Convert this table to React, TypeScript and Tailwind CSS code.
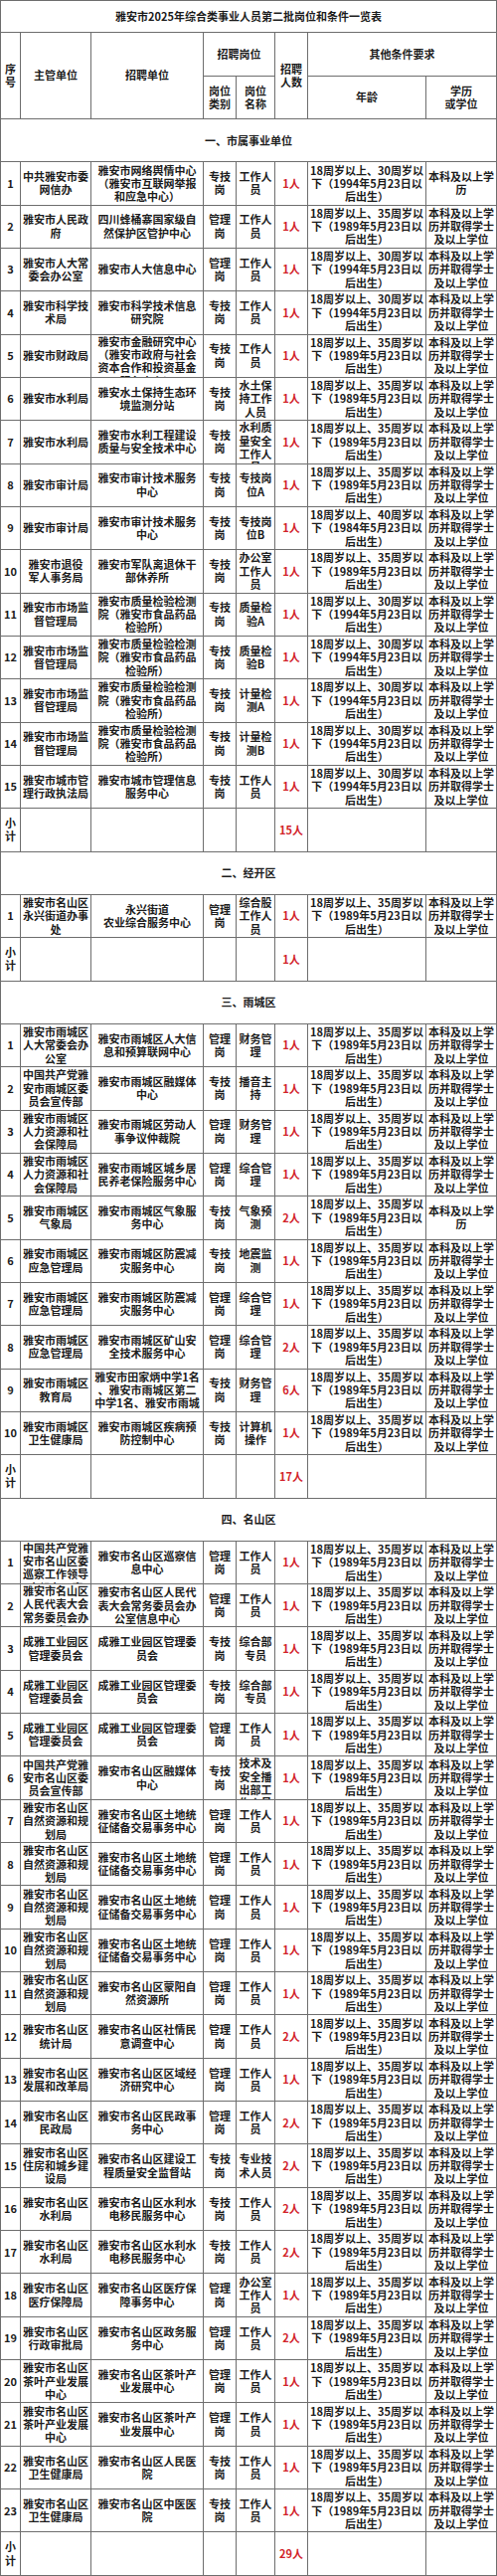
import type { ReactNode } from "react";
import clsx from "clsx";

type Job = {
  dept: string;
  unit: string;
  kind: string;
  post: string;
  count: number;
  age: 30 | 35 | 40;
  edu: "a" | "b";
};

type Section = { title: string; jobs: Job[] };

const AGE_YEAR = { 30: 1994, 35: 1989, 40: 1984 } as const;

function ageText(age: 30 | 35 | 40) {
  return `18周岁以上、${age}周岁以\n下（${AGE_YEAR[age]}年5月23日以\n后出生）`;
}

function eduText(edu: "a" | "b") {
  return edu === "a" ? "本科及以上学历" : "本科及以上学历并取得学士及以上学位";
}

function j(
  dept: string,
  unit: string,
  kind: string,
  post: string,
  count = 1,
  age: 30 | 35 | 40 = 35,
  edu: "a" | "b" = "b",
): Job {
  return { dept, unit, kind, post, count, age, edu };
}

const ZJ = "专技岗";
const GL = "管理岗";
const GZ = "工作人员";

const sections: Section[] = [
  {
    title: "一、市属事业单位",
    jobs: [
      j("中共雅安市委网信办", "雅安市网络舆情中心（雅安市互联网举报和应急中心）", ZJ, GZ, 1, 30, "a"),
      j("雅安市人民政府", "四川蜂桶寨国家级自然保护区管护中心", GL, GZ),
      j("雅安市人大常委会办公室", "雅安市人大信息中心", GL, GZ, 1, 30),
      j("雅安市科学技术局", "雅安市科学技术信息研究院", ZJ, GZ, 1, 30),
      j("雅安市财政局", "雅安市金融研究中心（雅安市政府与社会资本合作和投资基金服务中心）", ZJ, GZ),
      j("雅安市水利局", "雅安水土保持生态环境监测分站", ZJ, "水土保持工作人员"),
      j("雅安市水利局", "雅安市水利工程建设质量与安全技术中心", ZJ, "水利质量安全工作人员"),
      j("雅安市审计局", "雅安市审计技术服务中心", ZJ, "专技岗位A"),
      j("雅安市审计局", "雅安市审计技术服务中心", ZJ, "专技岗位B", 1, 40),
      j("雅安市退役\n军人事务局", "雅安市军队离退休干部休养所", ZJ, "办公室工作人员"),
      j("雅安市市场监督管理局", "雅安市质量检验检测院（雅安市食品药品检验所）", ZJ, "质量检验A", 1, 30),
      j("雅安市市场监督管理局", "雅安市质量检验检测院（雅安市食品药品检验所）", ZJ, "质量检验B", 1, 30),
      j("雅安市市场监督管理局", "雅安市质量检验检测院（雅安市食品药品检验所）", ZJ, "计量检测A", 1, 30),
      j("雅安市市场监督管理局", "雅安市质量检验检测院（雅安市食品药品检验所）", ZJ, "计量检测B", 1, 30),
      j("雅安市城市管理行政执法局", "雅安市城市管理信息服务中心", ZJ, GZ, 1, 30),
    ],
  },
  {
    title: "二、经开区",
    jobs: [j("雅安市名山区永兴街道办事处", "永兴街道\n农业综合服务中心", GL, "综合股工作人员")],
  },
  {
    title: "三、雨城区",
    jobs: [
      j("雅安市雨城区人大常委会办公室", "雅安市雨城区人大信息和预算联网中心", GL, "财务管理"),
      j("中国共产党雅安市雨城区委员会宣传部", "雅安市雨城区融媒体中心", ZJ, "播音主持"),
      j("雅安市雨城区人力资源和社会保障局", "雅安市雨城区劳动人事争议仲裁院", GL, "财务管理"),
      j("雅安市雨城区人力资源和社会保障局", "雅安市雨城区城乡居民养老保险服务中心", GL, "综合管理"),
      j("雅安市雨城区气象局", "雅安市雨城区气象服务中心", ZJ, "气象预测", 2, 35, "a"),
      j("雅安市雨城区应急管理局", "雅安市雨城区防震减灾服务中心", ZJ, "地震监测"),
      j("雅安市雨城区应急管理局", "雅安市雨城区防震减灾服务中心", GL, "综合管理"),
      j("雅安市雨城区应急管理局", "雅安市雨城区矿山安全技术服务中心", GL, "综合管理", 2),
      j("雅安市雨城区教育局", "雅安市田家炳中学1名\n、雅安市雨城区第二\n中学1名、雅安市雨城", ZJ, "财务管理", 6),
      j("雅安市雨城区卫生健康局", "雅安市雨城区疾病预防控制中心", ZJ, "计算机操作"),
    ],
  },
  {
    title: "四、名山区",
    jobs: [
      j("中国共产党雅安市名山区委巡察工作领导小组办公室", "雅安市名山区巡察信息中心", GL, GZ),
      j("雅安市名山区人民代表大会常务委员会办公室", "雅安市名山区人民代表大会常务委员会办公室信息中心", GL, GZ),
      j("成雅工业园区管理委员会", "成雅工业园区管理委员会", ZJ, "综合部专员"),
      j("成雅工业园区管理委员会", "成雅工业园区管理委员会", ZJ, "综合部专员"),
      j("成雅工业园区管理委员会", "成雅工业园区管理委员会", GL, GZ),
      j("中国共产党雅安市名山区委员会宣传部", "雅安市名山区融媒体中心", ZJ, "技术及安全播出部工作人员"),
      j("雅安市名山区自然资源和规划局", "雅安市名山区土地统征储备交易事务中心", GL, GZ),
      j("雅安市名山区自然资源和规划局", "雅安市名山区土地统征储备交易事务中心", GL, GZ),
      j("雅安市名山区自然资源和规划局", "雅安市名山区土地统征储备交易事务中心", GL, GZ),
      j("雅安市名山区自然资源和规划局", "雅安市名山区土地统征储备交易事务中心", GL, GZ),
      j("雅安市名山区自然资源和规划局", "雅安市名山区蒙阳自然资源所", GL, GZ),
      j("雅安市名山区统计局", "雅安市名山区社情民意调查中心", GL, GZ, 2),
      j("雅安市名山区发展和改革局", "雅安市名山区区域经济研究中心", GL, GZ),
      j("雅安市名山区民政局", "雅安市名山区民政事务中心", GL, GZ, 2),
      j("雅安市名山区住房和城乡建设局", "雅安市名山区建设工程质量安全监督站", ZJ, "专业技术人员", 2),
      j("雅安市名山区水利局", "雅安市名山区水利水电移民服务中心", ZJ, GZ, 2),
      j("雅安市名山区水利局", "雅安市名山区水利水电移民服务中心", ZJ, GZ, 2),
      j("雅安市名山区医疗保障局", "雅安市名山区医疗保障事务中心", GL, "办公室工作人员"),
      j("雅安市名山区行政审批局", "雅安市名山区政务服务中心", GL, GZ, 2),
      j("雅安市名山区茶叶产业发展中心", "雅安市名山区茶叶产业发展中心", GL, GZ),
      j("雅安市名山区茶叶产业发展中心", "雅安市名山区茶叶产业发展中心", GL, GZ),
      j("雅安市名山区卫生健康局", "雅安市名山区人民医院", ZJ, GZ),
      j("雅安市名山区卫生健康局", "雅安市名山区中医医院", ZJ, GZ),
    ],
  },
];

function Cell({ children, className }: { children?: ReactNode; className?: string }) {
  return (
    <div
      className={clsx(
        "flex justify-center overflow-hidden bg-white text-center [align-items:safe_center]",
        className,
      )}
    >
      <div className="w-full whitespace-pre-line">{children}</div>
    </div>
  );
}

const ROW = "h-[42.33px]";
const RED = "text-[#d2232a]";

function JobRow({ index, job }: { index: number; job: Job }) {
  return (
    <>
      <Cell className={ROW}>{index}</Cell>
      <Cell className={clsx(ROW, "px-[1.5px]")}>{job.dept}</Cell>
      <Cell className={clsx(ROW, "px-[3px]")}>{job.unit}</Cell>
      <Cell className={ROW}>{job.kind}</Cell>
      <Cell className={ROW}>{job.post}</Cell>
      <Cell className={clsx(ROW, RED)}>{job.count}人</Cell>
      <Cell className={ROW}>{ageText(job.age)}</Cell>
      <Cell className={clsx(ROW, "px-[1px]")}>{eduText(job.edu)}</Cell>
    </>
  );
}

function SubtotalRow({ total }: { total: number }) {
  return (
    <>
      <Cell className={ROW}>小计</Cell>
      <Cell className={ROW} />
      <Cell className={ROW} />
      <Cell className={ROW} />
      <Cell className={ROW} />
      <Cell className={clsx(ROW, RED)}>{total}人</Cell>
      <Cell className={ROW} />
      <Cell className={ROW} />
    </>
  );
}

export default function App() {
  return (
    <div className="w-[500px] bg-white font-['Noto_Sans_CJK_SC',sans-serif] text-[11px] leading-[13.33px] font-bold text-[#1c1c1c] [text-spacing-trim:space-all]">
      <div className="grid grid-cols-[19px_70px_112px_32px_38px_32px_118px_70px] gap-px bg-[#6e6e6e] p-px">
        <Cell className="col-span-8 h-[31px]">雅安市2025年综合类事业人员第二批岗位和条件一览表</Cell>

        <Cell className="row-span-2">序号</Cell>
        <Cell className="row-span-2">主管单位</Cell>
        <Cell className="row-span-2">招聘单位</Cell>
        <Cell className="col-span-2 h-[43px]">招聘岗位</Cell>
        <Cell className="row-span-2">招聘人数</Cell>
        <Cell className="col-span-2 h-[43px]">其他条件要求</Cell>
        <Cell className="h-[42px]">岗位类别</Cell>
        <Cell className="h-[42px]">{"岗位\n名称"}</Cell>
        <Cell className="h-[42px]">年龄</Cell>
        <Cell className="h-[42px]">{"学历\n或学位"}</Cell>

        {sections.map((section) => (
          <SectionBlock key={section.title} section={section} />
        ))}
      </div>
    </div>
  );
}

function SectionBlock({ section }: { section: Section }) {
  const total = section.jobs.reduce((sum, job) => sum + job.count, 0);
  return (
    <>
      <Cell className={clsx(ROW, "col-span-8")}>{section.title}</Cell>
      {section.jobs.map((job, i) => (
        <JobRow key={i} index={i + 1} job={job} />
      ))}
      <SubtotalRow total={total} />
    </>
  );
}
